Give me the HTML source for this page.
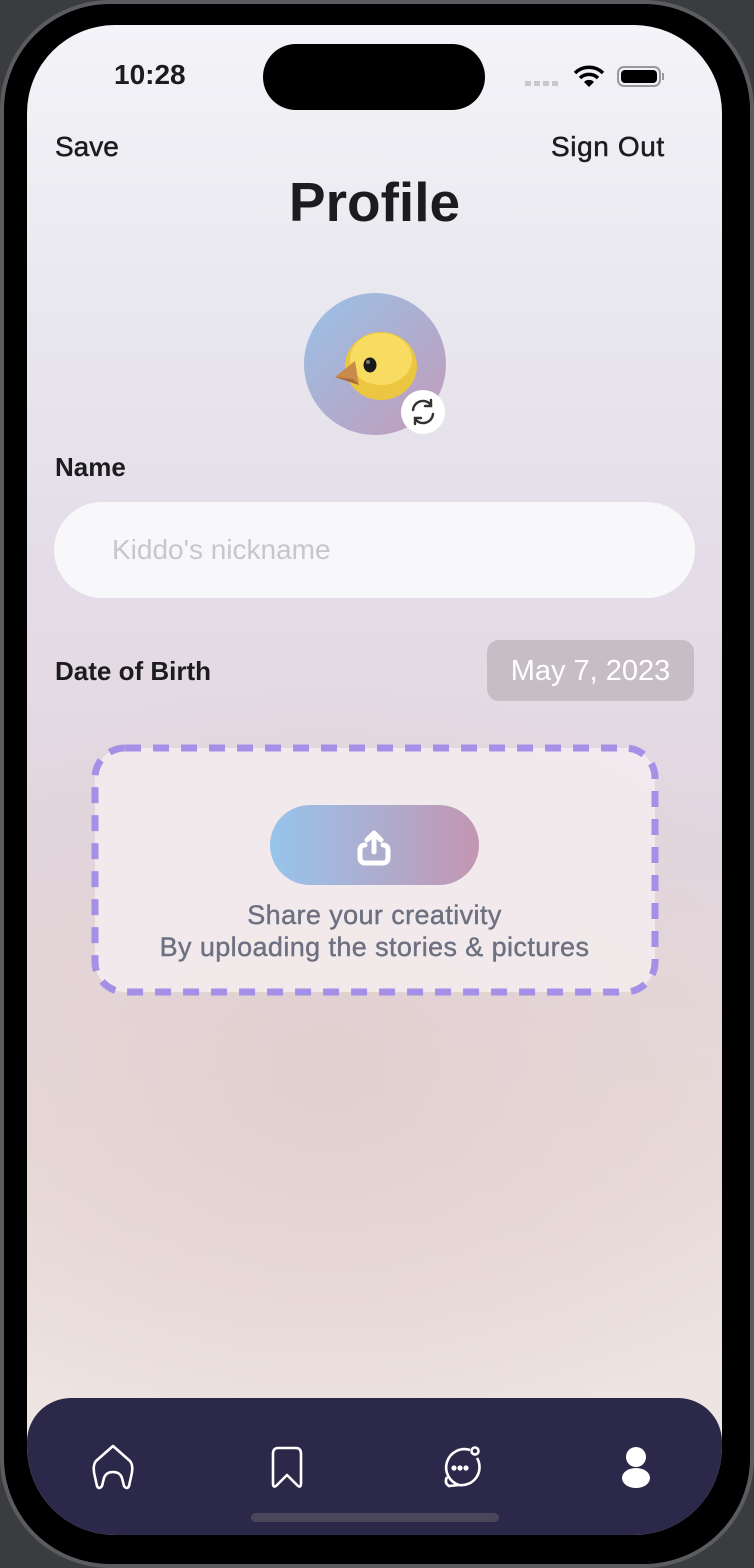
<!DOCTYPE html>
<html><head><meta charset="utf-8"><style>
*{margin:0;padding:0;box-sizing:border-box}
html,body{width:754px;height:1568px;overflow:hidden;background:#3a3c40;font-family:"Liberation Sans",sans-serif}
.phone{position:absolute;left:0;top:0;width:754px;height:1568px;border-radius:110px;background:#000;border:4px solid #5a5c60}
.screen{position:absolute;left:27px;top:25px;width:695px;height:1510px;border-radius:88px;overflow:hidden;
background:radial-gradient(ellipse 500px 400px at 300px 1050px,#e2cfd0 0%,rgba(226,207,208,0) 100%),
linear-gradient(180deg,#f3f3f8 0%,#eaeaf0 15%,#e4dde8 35%,#e2d6de 55%,#e9dcd8 75%,#f1e9e8 100%)}
.t{position:absolute;color:#1c1c1e}
.tab{position:absolute;left:0;top:1373px;width:695px;height:137px;background:#2c2849;border-radius:44px 44px 0 0}
</style></head><body>
<div class="phone"></div>
<div class="screen">
 <div class="t" style="left:87px;top:34px;font-size:28px;font-weight:bold">10:28</div>
 <div style="position:absolute;left:236px;top:19px;width:222px;height:66px;border-radius:33px;background:#000"></div>
 <div style="position:absolute;left:498px;top:56px;width:35px;height:5px;background:repeating-linear-gradient(90deg,#c8c8cc 0 6px,transparent 6px 9px)"></div>
 <svg style="position:absolute;left:546px;top:40px" width="32" height="24" viewBox="0 0 32 24"><path d="M2 8a20 20 0 0 1 28 0" stroke="#000" stroke-width="3.5" fill="none"/><path d="M7 13a13 13 0 0 1 18 0" stroke="#000" stroke-width="3.5" fill="none"/><path d="M11 17l5 5 5-5a7 7 0 0 0-10 0z" fill="#000"/></svg>
 <div style="position:absolute;left:590px;top:41px;width:44px;height:21px;border:2px solid #999;border-radius:7px;padding:2px"><div style="width:100%;height:100%;background:#000;border-radius:4px"></div></div>
 <div style="position:absolute;left:635px;top:48px;width:2px;height:7px;background:#999"></div>

 <div class="t" style="left:28px;top:106px;font-size:28px;-webkit-text-stroke:0.5px #1c1c1e">Save</div>
 <div class="t" style="left:524px;top:106px;font-size:28px;letter-spacing:0.6px;-webkit-text-stroke:0.5px #1c1c1e">Sign Out</div>
 <div class="t" style="left:0;width:695px;text-align:center;top:145px;font-size:55px;font-weight:bold">Profile</div>

 <div style="position:absolute;left:277px;top:268px;width:142px;height:142px;border-radius:50%;background:linear-gradient(135deg,#98c2e8,#c49ab8)"></div>
 <svg style="position:absolute;left:306px;top:304px" width="90" height="76" viewBox="0 0 90 76">
  <ellipse cx="48" cy="37" rx="36" ry="34" fill="#ecc640"/>
  <ellipse cx="48" cy="30" rx="31" ry="26" fill="#f8dc62"/>
  <path d="M22 32 L2 48 L26 56 Z" fill="#c98a4a"/>
  <path d="M2 48 L26 56 L20 50Z" fill="#a86a36"/>
  <ellipse cx="37" cy="36" rx="6.5" ry="7.5" fill="#1a1a1a"/><circle cx="35" cy="33" r="2" fill="#777"/>
 </svg>
 <div style="position:absolute;left:374px;top:365px;width:44px;height:44px;border-radius:50%;background:#fff"></div>
 <svg style="position:absolute;left:381px;top:372px" width="30" height="30" viewBox="0 0 30 30" fill="none" stroke="#333" stroke-width="2.4" stroke-linecap="round"><path d="M5 13a10 10 0 0 1 18-5"/><path d="M23 3v6h-6"/><path d="M25 17a10 10 0 0 1-18 5"/><path d="M7 27v-6h6"/></svg>

 <div class="t" style="left:28px;top:427px;font-size:26px;font-weight:bold">Name</div>
 <div style="position:absolute;left:27px;top:477px;width:641px;height:96px;border-radius:48px;background:#f8f7f9"></div>
 <div class="t" style="left:85px;top:509px;font-size:28px;color:#c8c6cc">Kiddo's nickname</div>

 <div class="t" style="left:28px;top:631px;font-size:26px;font-weight:bold">Date of Birth</div>
 <div style="position:absolute;left:460px;top:615px;width:207px;height:61px;border-radius:12px;background:#c6bec4"></div>
 <div class="t" style="left:460px;width:207px;text-align:center;top:630px;font-size:29px;color:#fff">May 7, 2023</div>

 <div style="position:absolute;left:68px;top:723px;width:560px;height:244px;border-radius:30px;background:rgba(245,240,241,0.75)"></div>
 <svg style="position:absolute;left:64px;top:719px" width="568" height="252"><rect x="4" y="4" width="560" height="244" rx="30" fill="none" stroke="#a490e6" stroke-width="7" stroke-dasharray="16 12"/></svg>
 <div style="position:absolute;left:243px;top:780px;width:209px;height:80px;border-radius:40px;background:linear-gradient(90deg,#97c4ec,#c396b2)"></div>
 <svg style="position:absolute;left:325px;top:803px" width="44" height="40" viewBox="0 0 44 40" fill="none" stroke="#fff" stroke-width="5" stroke-linecap="round" stroke-linejoin="round"><path d="M22 24V5M15 12l7-7 7 7"/><path d="M13 17c-3 0-5 2-5 5v8c0 3 2 5 5 5h18c3 0 5-2 5-5v-8c0-3-2-5-5-5"/></svg>
 <div class="t" style="left:0;width:695px;text-align:center;top:874px;font-size:27px;color:#6c7080;line-height:32px;letter-spacing:0.4px;-webkit-text-stroke:0.4px #6c7080">Share your creativity<br>By uploading the stories &amp; pictures</div>

 <div class="tab"></div>
 <svg style="position:absolute;left:63px;top:1418px" width="46" height="50" viewBox="0 0 46 50" fill="none" stroke="#fff" stroke-width="2.6" stroke-linejoin="round"><path d="M23 3 L40 18 Q44 23 41 34 L39 43 Q37 47 34 43 L32 35 Q30 29 23 29 Q16 29 14 35 L12 43 Q9 47 7 43 L5 34 Q2 23 6 18 Z"/></svg>
 <svg style="position:absolute;left:243px;top:1420px" width="34" height="46" viewBox="0 0 34 46" fill="none" stroke="#fff" stroke-width="2.6" stroke-linejoin="round"><path d="M8 3h18q5 0 5 6v29q0 6-4 2l-10-10-10 10q-4 4-4-2V9q0-6 5-6z"/></svg>
 <svg style="position:absolute;left:412px;top:1418px" width="46" height="50" viewBox="0 0 46 50" fill="none" stroke="#fff" stroke-width="2.6"><path d="M31 7A18 18 0 1 0 20 42L10 43Q5 40 8 34"/><path d="M38 15A18 18 0 0 1 20 42"/><circle cx="36" cy="8" r="3.5"/><circle cx="15" cy="25" r="1.3" fill="#fff"/><circle cx="21" cy="25" r="1.3" fill="#fff"/><circle cx="27" cy="25" r="1.3" fill="#fff"/></svg>
 <svg style="position:absolute;left:591px;top:1422px" width="36" height="42" viewBox="0 0 36 42" fill="#fff"><ellipse cx="18" cy="10" rx="10" ry="10"/><ellipse cx="18" cy="31" rx="14" ry="10"/></svg>
 <div style="position:absolute;left:224px;top:1488px;width:248px;height:9px;border-radius:5px;background:#4a475c"></div>
</div>
</body></html>
